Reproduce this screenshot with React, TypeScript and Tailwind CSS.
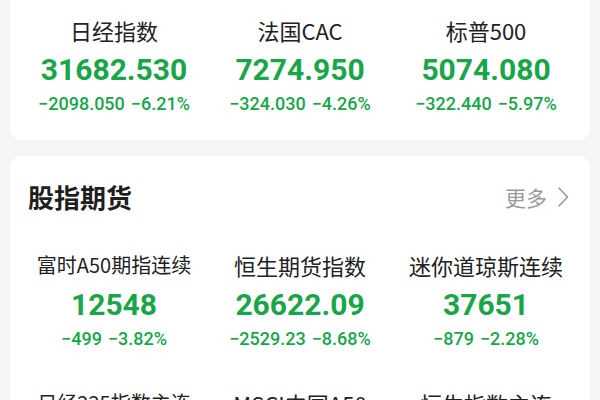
import React from "react";

const CJK = { fontFamily: '"Noto Sans CJK SC", "Noto Sans", sans-serif' };
const NUM = { fontFamily: 'Roboto, "Noto Sans", sans-serif' };

type Item = { name: string; value: string; chg: string; pct: string; small?: boolean };

const top: Item[] = [
  { name: "日经指数", value: "31682.530", chg: "−2098.050", pct: "−6.21%" },
  { name: "法国CAC", value: "7274.950", chg: "−324.030", pct: "−4.26%" },
  { name: "标普500", value: "5074.080", chg: "−322.440", pct: "−5.97%" },
];

const fut: Item[] = [
  { name: "富时A50期指连续", value: "12548", chg: "−499", pct: "−3.82%", small: true },
  { name: "恒生期货指数", value: "26622.09", chg: "−2529.23", pct: "−8.68%" },
  { name: "迷你道琼斯连续", value: "37651", chg: "−879", pct: "−2.28%" },
  { name: "日经225指数主连", value: "32120", chg: "−2410", pct: "−6.98%", small: true },
  { name: "MSCI中国A50", value: "1762.40", chg: "−120.60", pct: "−6.40%" },
  { name: "恒生指数主连", value: "19845", chg: "−1310", pct: "−6.19%" },
];

function Cell({ it }: { it: Item }) {
  return (
    <div className="flex flex-col items-center">
      <div
        style={CJK}
        className={
          "leading-[30px] h-[30px] whitespace-nowrap text-[#222222] " +
          (it.small ? "text-[20px]" : "text-[22px]")
        }
      >
        {it.name}
      </div>
      <div style={NUM} className="mt-[5px] text-[30px] leading-[40px] font-bold text-[#19a54a] whitespace-nowrap">
        {it.value}
      </div>
      <div style={NUM} className="mt-[2px] text-[18px] leading-[24px] font-medium text-[#19a54a] whitespace-nowrap flex gap-[6px]">
        <span>{it.chg}</span>
        <span>{it.pct}</span>
      </div>
    </div>
  );
}

export default function App() {
  return (
    <div className="w-[600px] h-[400px] overflow-hidden bg-[#f4f5f4] px-[10px]">
      <div className="bg-white rounded-b-[12px] px-[11px] pt-[15px] pb-[24px] grid grid-cols-3">
        {top.map((it) => (
          <Cell key={it.name} it={it} />
        ))}
      </div>
      <div className="mt-[16px] bg-white rounded-t-[12px] pt-[23px]">
        <div className="flex items-center justify-between pl-[18px] pr-[20px]">
          <div style={CJK} className="text-[26px] leading-[36px] font-bold text-[#1e1e1e]">
            股指期货
          </div>
          <div className="flex items-center gap-[9px]">
            <span style={CJK} className="text-[21px] leading-[36px] text-[#9a9a9a]">
              更多
            </span>
            <svg width="14" height="22" viewBox="0 0 14 22" fill="none">
              <path d="M3 2 L11.5 11 L3 20" stroke="#9a9a9a" strokeWidth="1.6" strokeLinecap="round" strokeLinejoin="round" />
            </svg>
          </div>
        </div>
        <div className="mt-[35px] px-[11px] grid grid-cols-3 gap-y-[37px]">
          {fut.map((it) => (
            <Cell key={it.name} it={it} />
          ))}
        </div>
      </div>
    </div>
  );
}
